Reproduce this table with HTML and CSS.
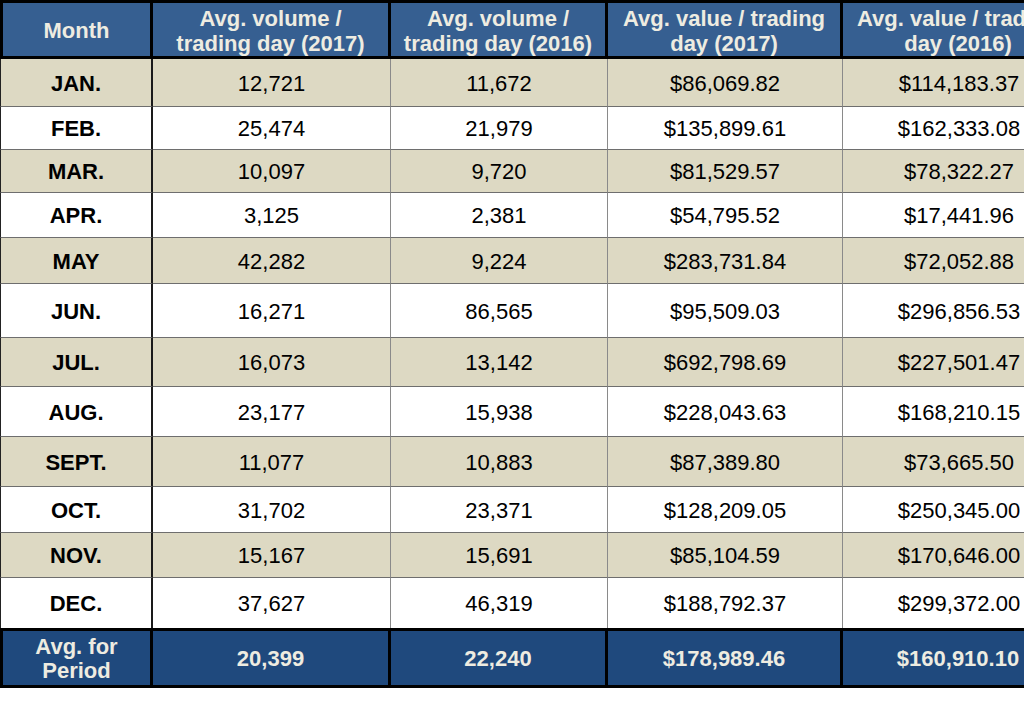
FILE: index.html
```html
<!DOCTYPE html>
<html lang="en">
<head>
<meta charset="utf-8">
<title>Average volume and value per trading day</title>
<link rel="stylesheet" href="styles.css">
</head>
<body>
<table class="stats">
  <colgroup>
    <col class="c-month">
    <col class="c-vol17">
    <col class="c-vol16">
    <col class="c-val17">
    <col class="c-val16">
  </colgroup>
  <thead>
    <tr class="head">
      <th>Month</th>
      <th>Avg. volume /<br>trading day (2017)</th>
      <th>Avg. volume /<br>trading day (2016)</th>
      <th>Avg. value / trading<br>day (2017)</th>
      <th>Avg. value / trading<br>day (2016)</th>
    </tr>
  </thead>
  <tbody>
    <tr class="shade h48"><th>JAN.</th><td>12,721</td><td>11,672</td><td>$86,069.82</td><td>$114,183.37</td></tr>
    <tr class="h43"><th>FEB.</th><td>25,474</td><td>21,979</td><td>$135,899.61</td><td>$162,333.08</td></tr>
    <tr class="shade h43"><th>MAR.</th><td>10,097</td><td>9,720</td><td>$81,529.57</td><td>$78,322.27</td></tr>
    <tr class="h45"><th>APR.</th><td>3,125</td><td>2,381</td><td>$54,795.52</td><td>$17,441.96</td></tr>
    <tr class="shade h46"><th>MAY</th><td>42,282</td><td>9,224</td><td>$283,731.84</td><td>$72,052.88</td></tr>
    <tr class="h54"><th>JUN.</th><td>16,271</td><td>86,565</td><td>$95,509.03</td><td>$296,856.53</td></tr>
    <tr class="shade h49"><th>JUL.</th><td>16,073</td><td>13,142</td><td>$692,798.69</td><td>$227,501.47</td></tr>
    <tr class="h50"><th>AUG.</th><td>23,177</td><td>15,938</td><td>$228,043.63</td><td>$168,210.15</td></tr>
    <tr class="shade h50"><th>SEPT.</th><td>11,077</td><td>10,883</td><td>$87,389.80</td><td>$73,665.50</td></tr>
    <tr class="h46"><th>OCT.</th><td>31,702</td><td>23,371</td><td>$128,209.05</td><td>$250,345.00</td></tr>
    <tr class="shade h45"><th>NOV.</th><td>15,167</td><td>15,691</td><td>$85,104.59</td><td>$170,646.00</td></tr>
    <tr class="last h50"><th>DEC.</th><td>37,627</td><td>46,319</td><td>$188,792.37</td><td>$299,372.00</td></tr>
  </tbody>
  <tfoot>
    <tr class="foot">
      <th>Avg. for<br>Period</th>
      <td>20,399</td>
      <td>22,240</td>
      <td>$178,989.46</td>
      <td>$160,910.10</td>
    </tr>
  </tfoot>
</table>
</body>
</html>
```
FILE: styles.css
```css
html, body {
  margin: 0;
  padding: 0;
  background: #ffffff;
  overflow: hidden;
}

.stats {
  border-collapse: separate;
  border-spacing: 0;
  table-layout: fixed;
  width: 1076px;
  font-family: "Liberation Sans", Arial, sans-serif;
  font-size: 22px;
  color: #000000;
}

.c-month { width: 153px; }
.c-vol17 { width: 238px; }
.c-vol16 { width: 217px; }
.c-val17 { width: 235px; }
.c-val16 { width: 233px; }

.stats th,
.stats td {
  box-sizing: border-box;
  padding: 1px 0 0;
  text-align: center;
  vertical-align: middle;
  white-space: nowrap;
}

/* header */
.head th {
  height: 59px;
  padding-top: 2px;
  background: #365f91;
  color: #eeece1;
  font-weight: bold;
  line-height: 25px;
  border-top: 3px solid #000;
  border-bottom: 3px solid #000;
  border-right: 3px solid #000;
}
.head th:first-child {
  border-left: 3px solid #000;
}

/* body */
tbody th,
tbody td {
  border-bottom: 1px solid #6e6e6e;
  border-right: 1px solid #8a8a8a;
  line-height: 25px;
}
tbody th {
  font-weight: bold;
  border-left: 1px solid #222;
  border-right: 2px solid #1a1a1a;
}
tbody td {
  font-weight: normal;
}
tbody tr.shade th,
tbody tr.shade td {
  background: #ddd9c3;
}
tbody tr.last th,
tbody tr.last td {
  border-bottom: none;
}

.h43 > * { height: 43px; }
.h45 > * { height: 45px; }
.h46 > * { height: 46px; }
.h48 > * { height: 48px; }
.h49 > * { height: 49px; }
.h50 > * { height: 50px; }
.h54 > * { height: 54px; }

/* footer */
.foot th,
.foot td {
  height: 60px;
  padding-top: 1px;
  background: #1f497d;
  color: #eeece1;
  font-weight: bold;
  line-height: 24px;
  border-top: 3px solid #000;
  border-bottom: 3px solid #000;
  border-right: 3px solid #000;
}
.foot th {
  border-left: 3px solid #000;
}
```
